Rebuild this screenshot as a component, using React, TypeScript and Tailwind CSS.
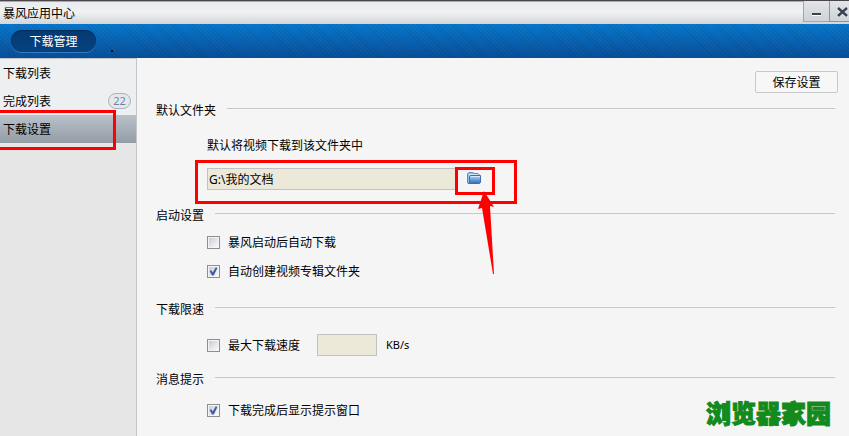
import { useState, type ReactNode } from "react";

const navItems = [
  { label: "下载列表" },
  { label: "完成列表", count: 22 },
  { label: "下载设置", active: true },
];

function FolderIcon() {
  return (
    <svg width="14" height="12" viewBox="0 0 14 12" aria-hidden="true">
      <defs>
        <linearGradient id="folder" x1="0" y1="0" x2="0" y2="1">
          <stop offset="0" stopColor="#b4d8f5" />
          <stop offset="0.5" stopColor="#6ba5dc" />
          <stop offset="1" stopColor="#2f68ae" />
        </linearGradient>
      </defs>
      <path d="M.5 11V1.8L1.8.5h4L7 1.5h4l1 1V11z" fill="#8fc0ea" stroke="#5c8cc2" />
      <path d="M2 2.5h9" stroke="#d3e9fa" />
      <path d="M1.5 11.5l1-1V4.5l1-1h10v7l-1 1z" fill="url(#folder)" stroke="#3c6fb0" />
      <path d="M4 4.5h9" stroke="#d3e9fa" />
    </svg>
  );
}

function Section({ title, children }: { title: string; children: ReactNode }) {
  return (
    <section className="pr-[3px]">
      <div className="flex h-5 gap-[11px] leading-5">
        <h2>{title}</h2>
        <div className="mt-2 h-px flex-1 bg-[#c6c8c9]" />
      </div>
      <div className="pl-[51px]">{children}</div>
    </section>
  );
}

function CheckOption({ label, defaultChecked = false }: { label: string; defaultChecked?: boolean }) {
  const [checked, setChecked] = useState(defaultChecked);

  return (
    <label className="flex h-5 items-center gap-2">
      <span className="relative size-[13px] shrink-0">
        <input
          type="checkbox"
          checked={checked}
          onChange={(e) => setChecked(e.target.checked)}
          className="block size-[13px] appearance-none border border-[#8e8f8f] bg-linear-to-br from-[#c3c9d2] to-white shadow-[inset_0_0_0_1px_#f4f4f4]"
        />
        {checked && (
          <svg className="pointer-events-none absolute inset-0" width="13" height="13" viewBox="0 0 13 13">
            <path d="M2.6 6l1.8-.8 1.3 2.2L8.8 2.2l1.6.7L6.8 10.4H5z" fill="#3f5ba9" />
          </svg>
        )}
      </span>
      {label}
    </label>
  );
}

export default function App() {
  return (
    <div className="flex min-h-screen flex-col bg-[#f5f5f5] font-['Noto_Sans_CJK_SC',sans-serif] text-xs text-black">
      {/* Title bar */}
      <header className="flex h-6 justify-between border-t border-[#4a464b] bg-linear-to-b from-[#e9ecee] via-[#eff1f2] to-[#d3d5d8] shadow-[inset_0_1px_0_#a9a9ac]">
        <h1 className="pl-[3px] leading-6">暴风应用中心</h1>
        <div className="flex h-[21px]">
          <button aria-label="最小化" className="flex w-[26px] items-center justify-center border-b border-l border-[#a3a7ab] bg-linear-to-b from-[#e2e5e8] to-[#cfd2d6]">
            <svg width="10" height="12" viewBox="0 0 10 12">
              <path d="M0 8h9v2H0z" fill="#39424e" />
              <path d="M0 10h9v1H0z" fill="#fff" />
            </svg>
          </button>
          <button aria-label="关闭" className="flex w-5 items-center justify-end border-b border-l border-[#8f9498] bg-linear-to-b from-[#e2e5e8] to-[#cfd2d6]">
            <svg width="12" height="12" viewBox="0 0 12 12">
              <path d="M1 4l9 8M10 4l-9 8" stroke="#fff" strokeWidth="2" />
              <path d="M1 3l9 8M10 3l-9 8" stroke="#39424e" strokeWidth="2.4" />
            </svg>
          </button>
        </div>
      </header>

      {/* Tab strip */}
      <nav className="flex h-[34px] items-center bg-[repeating-linear-gradient(45deg,#00000014_0_1px,transparent_1px_3px),linear-gradient(#0878cc,#0a4f99)] pl-[11px]">
        <button className="h-[22px] w-[85px] rounded-full bg-linear-to-b from-[#053a72] to-[#07427f] leading-[22px] text-white shadow-[0_1px_0_#2f7fc4,inset_0_1px_1px_#022b58]">
          下载管理
        </button>
        <span className="mt-5 ml-[15px] size-0.5 bg-[#10131a]" />
      </nav>

      <div className="flex flex-1">
        {/* Sidebar */}
        <aside className="relative w-[137px] shrink-0 overflow-hidden border-t border-r border-[#c3c6c9] bg-[#e6e6e6]">
          {navItems.map((item) => (
            <a
              key={item.label}
              href="#"
              className={
                item.active
                  ? "flex h-7 items-center bg-linear-to-b from-[#b9c1ca] to-[#949da6] pl-[3px]"
                  : "flex h-7 items-center justify-between bg-[#eeeff1] pr-[5px] pl-[3px]"
              }
            >
              {item.label}
              {item.count && (
                <span className="h-4 w-[23px] rounded-full border border-[#a9b3bd] bg-[#e4e8ec] text-center font-['Noto_Sans',sans-serif] text-[11px] leading-[14px] text-[#6f8496]">
                  {item.count}
                </span>
              )}
            </a>
          ))}
          <div className="pointer-events-none absolute top-[51px] -left-1 h-10 w-[120px] border-3 border-[#ff0000]" />
        </aside>

        {/* Settings */}
        <main className="flex-1 pt-[13px] pr-[11px] pl-[19px]">
          <div className="mb-[7px] flex justify-end">
            <button className="h-[22px] w-[83px] rounded-xs border border-[#c6c8ca] bg-[#f7f7f7] leading-5">保存设置</button>
          </div>

          <Section title="默认文件夹">
            <label htmlFor="folder-path" className="mt-[15px] block h-5 leading-5">
              默认将视频下载到该文件夹中
            </label>
            <div className="relative mt-[13px] mb-[15px] flex h-[22px] w-[290px] items-center">
              <input
                id="folder-path"
                defaultValue="G:\我的文档"
                className="h-[22px] w-[250px] border border-[#bfc3c4] bg-[#ece9d8] px-px font-['Noto_Sans','Noto_Sans_CJK_SC',sans-serif] outline-none"
              />
              <button aria-label="浏览" className="ml-[10px] pb-0.5">
                <FolderIcon />
              </button>
              <div className="pointer-events-none absolute -top-2 -left-3 h-11 w-[322px] border-3 border-[#ff0000]" />
              <div className="pointer-events-none absolute -top-px left-[248px] h-7 w-10 border-3 border-[#ff0000]" />
              <svg className="pointer-events-none absolute top-[23px] left-[271px]" width="18" height="84" viewBox="0 0 18 84">
                <path d="M6 0l10 16-4-1 4 68h-1L4 17l-4 1z" fill="#ff0000" />
              </svg>
            </div>
          </Section>

          <Section title="启动设置">
            <div className="mt-[7px] mb-[18px] flex flex-col gap-[9px]">
              <CheckOption label="暴风启动后自动下载" />
              <CheckOption label="自动创建视频专辑文件夹" defaultChecked />
            </div>
          </Section>

          <Section title="下载限速">
            <div className="mt-[15px] mb-[13px] flex h-[22px] items-center">
              <CheckOption label="最大下载速度" />
              <input
                aria-label="最大下载速度 KB/s"
                className="ml-[17px] h-[22px] w-[60px] border border-[#bfc3c4] bg-[#ece9d8] px-0.5 outline-none"
              />
              <span className="ml-[9px] font-['Noto_Sans',sans-serif] text-[11px]">KB/s</span>
            </div>
          </Section>

          <Section title="消息提示">
            <div className="mt-[11px]">
              <CheckOption label="下载完成后显示提示窗口" defaultChecked />
            </div>
          </Section>
        </main>
      </div>

      {/* Site mark */}
      <div className="pointer-events-none absolute right-[18px] bottom-2 text-[25px] leading-8 font-black text-[#128a1c] [-webkit-text-stroke:1px_#128a1c]">
        浏览器家园
      </div>
    </div>
  );
}
